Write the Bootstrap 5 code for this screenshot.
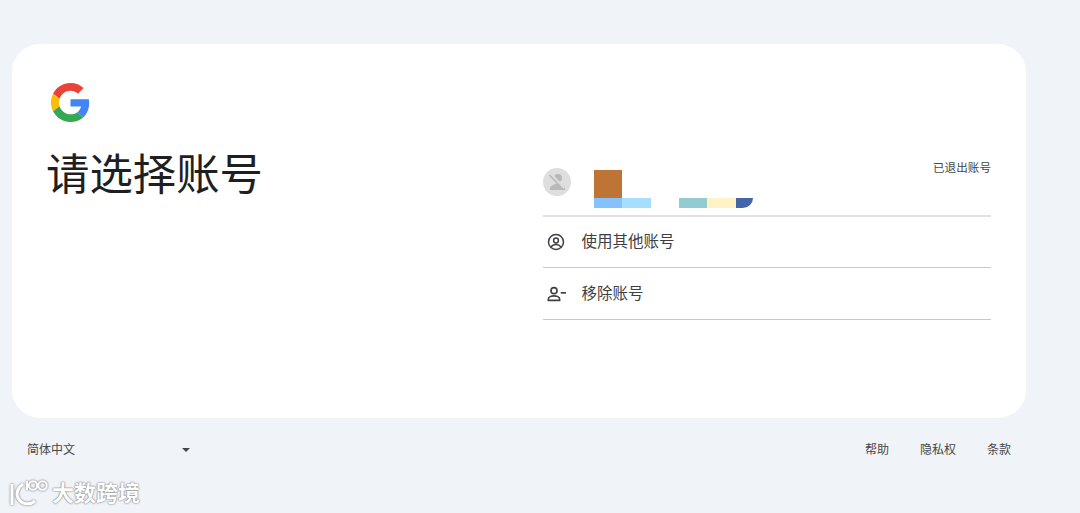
<!DOCTYPE html>
<html lang="zh-CN">
<head>
  <meta charset="UTF-8" />
  <meta name="viewport" content="width=device-width, initial-scale=1.0" />
  <title>请选择账号</title>
  <link href="https://cdn.jsdelivr.net/npm/bootstrap@5.3.2/dist/css/bootstrap.min.css" rel="stylesheet">
  <style>
    body {
      background-color: #f0f4f9;
      font-family: "Liberation Sans", "Noto Sans CJK SC", sans-serif;
      color: #1f1f1f;
      position: relative;
      height: 513px;
      overflow: hidden;
    }
    .page-wrap { width: 1026px; padding: 44px 0 0 12px; }
    .login-box {
      background: #fff;
      border-radius: 28px;
      height: 374px;
      padding: 39px 35px 0 36px;
    }
    .left-side { width: 494.5px; }
    .g-logo { display: block; margin-left: 3px; }
    .page-title {
      font-size: 43.4px;
      font-weight: 400;
      line-height: 52px;
      margin: 27px 0 0 -2px;
      color: #1f1f1f;
    }
    .right-side { flex: 1; padding-top: 77px; }
    .acct-row {
      height: 57px;
      border-bottom: 2px solid #e2e2e2;
    }
    .avatar-pic { margin-top: 8px; }
    .mosaic { margin-left: 23px; margin-top: 10px; }
    .block-o { width: 28px; height: 28px; background: #bd7434; }
    .mosaic-bottom { display: flex; height: 9.5px; }
    .sw { width: 28.5px; height: 100%; }
    .sw-gap { width: 28px; }
    .sw-a { background: #85c1ff; }
    .sw-b { background: #a5deff; }
    .sw-c { background: #93cbd3; }
    .sw-d { background: #fdf3c4; }
    .sw-e { width: 17px; background: #4466a8; border-bottom-right-radius: 14px; }
    .out-label { font-size: 11.6px; color: #444746; line-height: 16px; margin-left: auto; }
    .opt-row {
      height: 52px;
      border-bottom: 1px solid #c8c8c8;
      font-size: 15.5px;
      color: #3c4043;
    }
    .opt-first { height: 51px; }
    .opt-icon { width: 39px; padding-left: 4px; }
    .footer-bar {
      font-size: 12px;
      color: #444746;
      padding: 24px 15px 0 15px;
      line-height: 16px;
    }
    .lang-pick { width: 163px; }
    .lang-arrow {
      width: 0; height: 0;
      border-left: 4.5px solid transparent;
      border-right: 4.5px solid transparent;
      border-top: 4.5px solid #444746;
    }
    .foot-links { gap: 31px; }
    .watermark {
      position: absolute;
      left: 9px;
      top: 479px;
      color: #fff;
      font-size: 22px;
      font-weight: 700;
      line-height: 30px;
      text-shadow: 0 0 2px #777, 0 0 1px #777;
      gap: 3px;
    }
    .wm-logo { filter: drop-shadow(0 0 1px #666); }
  </style>
</head>
<body>
  <div class="page-wrap">
    <div class="login-box d-flex">
      <div class="left-side">
        <svg class="g-logo" width="39" height="39" viewBox="0 0 48 48">
          <path fill="#EA4335" d="M24 9.5c3.54 0 6.71 1.22 9.21 3.6l6.85-6.85C35.9 2.38 30.47 0 24 0 14.62 0 6.51 5.38 2.56 13.22l7.98 6.19C12.43 13.72 17.74 9.5 24 9.5z"/>
          <path fill="#4285F4" d="M46.98 24.55c0-1.57-.15-3.09-.38-4.55H24v9.02h12.94c-.58 2.96-2.26 5.48-4.78 7.18l7.73 6c4.51-4.18 7.09-10.36 7.09-17.65z"/>
          <path fill="#FBBC05" d="M10.53 28.59c-.48-1.45-.76-2.99-.76-4.59s.27-3.14.76-4.59l-7.98-6.19C.92 16.46 0 20.12 0 24c0 3.88.92 7.54 2.56 10.78l7.97-6.19z"/>
          <path fill="#34A853" d="M24 48c6.48 0 11.93-2.13 15.89-5.81l-7.73-6c-2.15 1.45-4.92 2.3-8.16 2.3-6.26 0-11.57-4.22-13.47-9.91l-7.98 6.19C6.51 42.62 14.62 48 24 48z"/>
        </svg>
        <h1 class="page-title">请选择账号</h1>
      </div>
      <div class="right-side">
        <div class="acct-row d-flex align-items-start">
          <svg class="avatar-pic" width="28" height="28" viewBox="0 0 28 28">
            <circle cx="14" cy="14" r="14" fill="#dedede"/>
            <circle cx="15" cy="10" r="4" fill="#b9b9b9"/>
            <path fill="#b9b9b9" d="M7 21c0-3.4 4-5 7.500-5s7.500 1.600 7.500 5v1H7z"/>
            <path stroke="#dedede" stroke-width="2.400" d="M8 6l13 14"/>
            <path stroke="#b9b9b9" stroke-width="1.600" d="M6.500 7l14 15"/>
          </svg>
          <div class="mosaic">
            <div class="block-o"></div>
            <div class="mosaic-bottom">
              <div class="sw sw-a"></div><div class="sw sw-b"></div><div class="sw-gap"></div>
              <div class="sw sw-c"></div><div class="sw sw-d"></div><div class="sw-e"></div>
            </div>
          </div>
          <div class="out-label">已退出账号</div>
        </div>
        <div class="opt-row opt-first d-flex align-items-center">
          <div class="opt-icon d-flex">
            <svg width="18" height="18" viewBox="0 0 24 24" fill="none" stroke="#3c4043" stroke-width="2">
              <circle cx="12" cy="12" r="10"/>
              <circle cx="12" cy="10" r="3.200"/>
              <path d="M5.500 18.500c1.500-2.300 4-3.300 6.500-3.300s5 1 6.500 3.300"/>
            </svg>
          </div>
          <span>使用其他账号</span>
        </div>
        <div class="opt-row d-flex align-items-center">
          <div class="opt-icon d-flex">
            <svg width="20" height="18" viewBox="0 0 26 24" fill="none" stroke="#3c4043" stroke-width="2.200">
              <circle cx="9" cy="7.500" r="4"/>
              <path d="M1.500 20.500v-2c0-2.600 4-4 7.500-4s7.500 1.400 7.500 4v2z"/>
              <path d="M18 10.500h7"/>
            </svg>
          </div>
          <span>移除账号</span>
        </div>
      </div>
    </div>
    <div class="footer-bar d-flex align-items-center justify-content-between">
      <div class="lang-pick d-flex align-items-center justify-content-between">
        <span>简体中文</span>
        <span class="lang-arrow"></span>
      </div>
      <div class="foot-links d-flex">
        <span>帮助</span>
        <span>隐私权</span>
        <span>条款</span>
      </div>
    </div>
  </div>
  <div class="watermark d-flex align-items-center">
    <svg class="wm-logo" width="40" height="30" viewBox="0 0 40 30" fill="none" stroke="#fff" stroke-width="3">
      <path d="M3 5v21"/>
      <path d="M14 5C8 9 7 15 9 19c3 6 11 8 17 3"/>
      <path d="M18 2v9" stroke-width="2"/>
      <circle cx="24" cy="6.500" r="4.200" stroke-width="2"/>
      <circle cx="33.500" cy="6.500" r="4.200" stroke-width="2"/>
    </svg>
    <span>大数跨境</span>
  </div>
  <script src="https://cdn.jsdelivr.net/npm/bootstrap@5.3.2/dist/js/bootstrap.bundle.min.js"></script>
</body>
</html>
